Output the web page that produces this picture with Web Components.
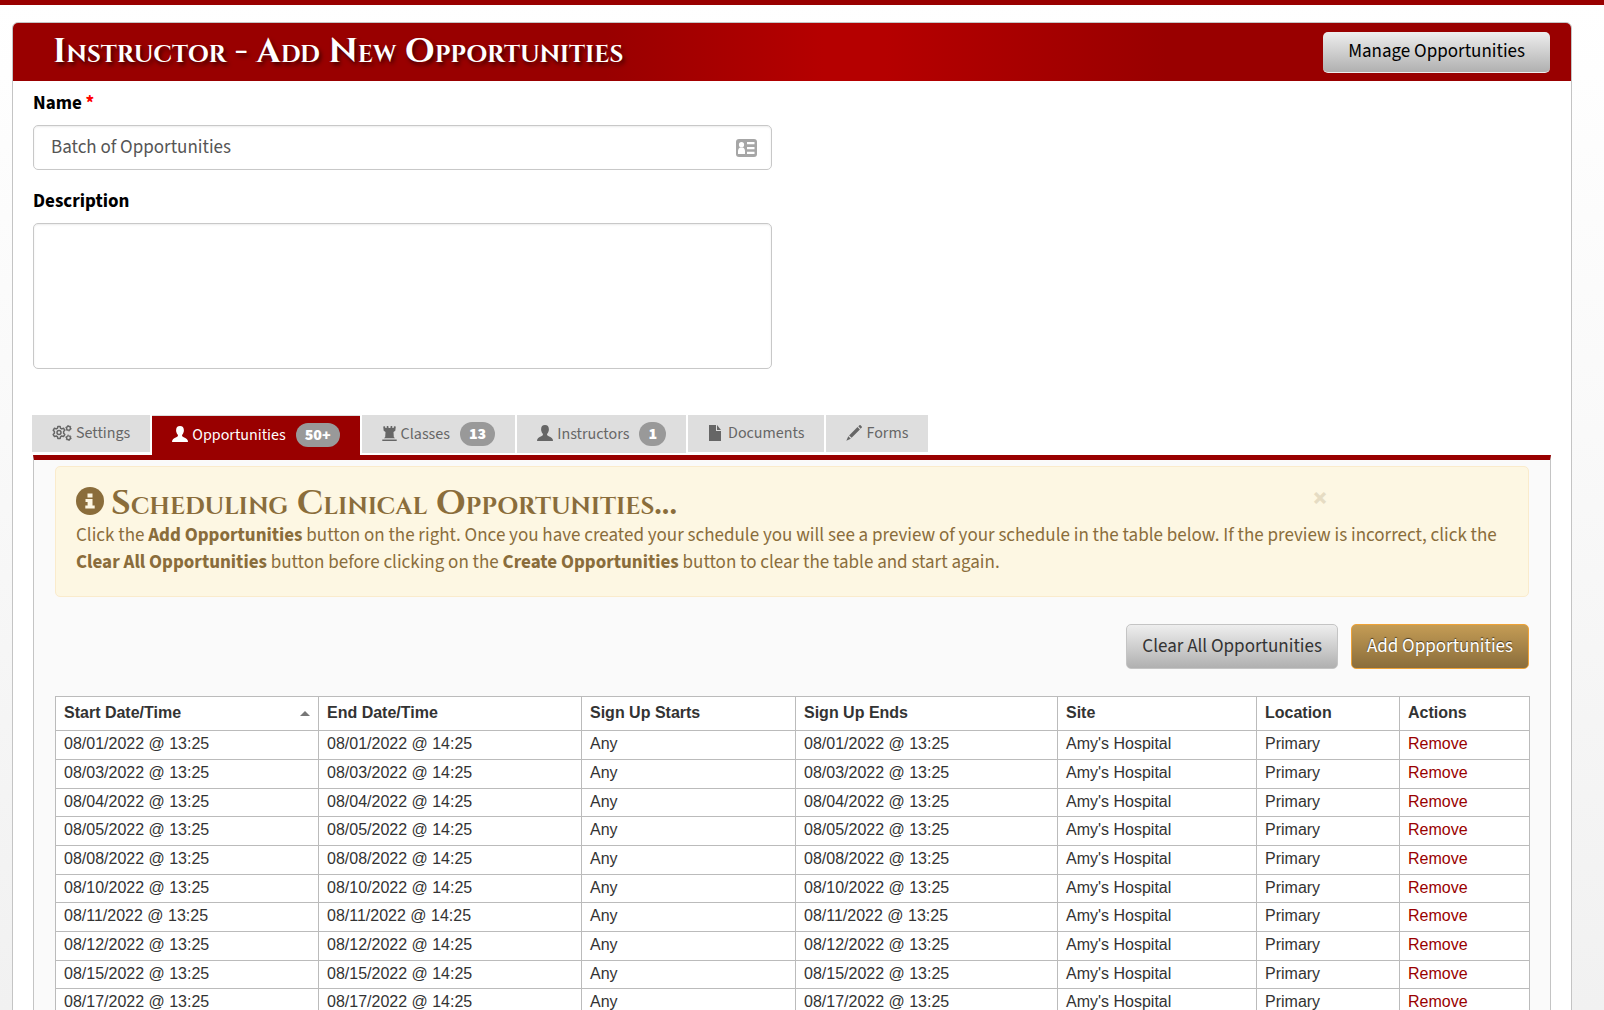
<!DOCTYPE html>
<html lang="en">
<head>
<meta charset="UTF-8">
<meta name="viewport" content="width=device-width, initial-scale=1.0">
<title>Instructor - Add New Opportunities</title>
<style>
    body {
        box-sizing: border-box;
        height: 100vh;
        margin: 0;
        overflow: hidden;
        border-top: 5px solid #990000;
        background: linear-gradient(#fff, #f1f1f1);
        color: #000;
        font: 19px/27px "Source Sans 3", "Noto Sans CJK SC", sans-serif;
    }

    .fields {
        display: grid;
        grid-template-columns: 1fr 1fr;
        column-gap: 40px;
        row-gap: 18px;
        margin-bottom: 46px;
    }

    .fields > * {
        grid-column: 1;
    }
</style>
</head>
<body>
    <page-card heading="Instructor - Add New Opportunities">
        <action-button slot="action" variant="header">Manage Opportunities</action-button>

        <div class="fields">
            <form-field label="Name" value="Batch of Opportunities" required></form-field>
            <form-field label="Description" multiline></form-field>
        </div>

        <tab-bar>
            <tab-item icon="cogs">Settings</tab-item>
            <tab-item icon="user" badge="50+" active>Opportunities</tab-item>
            <tab-item icon="tower" badge="13">Classes</tab-item>
            <tab-item icon="user" badge="1">Instructors</tab-item>
            <tab-item icon="file">Documents</tab-item>
            <tab-item icon="pencil">Forms</tab-item>
        </tab-bar>

        <tab-panel>
            <alert-box heading="Scheduling Clinical Opportunities...">
                Click the <strong>Add Opportunities</strong> button on the right. Once you have created your schedule you will see a preview of your schedule in the table below. If the preview is incorrect, click the <strong>Clear All Opportunities</strong> button before clicking on the <strong>Create Opportunities</strong> button to clear the table and start again.
            </alert-box>
            <action-button slot="actions">Clear All Opportunities</action-button>
            <action-button slot="actions" variant="gold">Add Opportunities</action-button>
            <schedule-table slot="table"></schedule-table>
        </tab-panel>
    </page-card>

<script>
const ICONS = {
    user: `<svg width="16" height="16" viewBox="0 0 16 16" fill="currentColor"><path d="M8 0C5.400 0 4.100 1.600 4.100 4.200c0 1.600.6 3.300 1.500 4.300.5.600.5 1.500-.1 2.100C4.300 11.600.9 12.500.3 14.200L0 16h16l-.3-1.800c-.6-1.700-4-2.600-5.200-3.600-.6-.6-.6-1.500-.1-2.100.9-1 1.500-2.700 1.500-4.300C11.900 1.600 10.600 0 8 0z"/></svg>`,
    tower: `<svg width="15" height="15" viewBox="0 0 15 15" fill="currentColor"><path d="M1.200.6 3 .2l.4 1.900h1.200L4.800 0h1.500l.3 2.100h1.800L8.700 0h1.500l.2 2.100h1.200L12 .2l1.800.4-.5 4.200-1.800 1.200.3 5 1.200 1.300H2l1.200-1.300.3-5L1.700 4.800zM.3 13.500h14.400V15H.3z"/></svg>`,
    file: `<svg width="16" height="16" viewBox="0 0 16 16" fill="currentColor"><path d="M1 0h7v6h5v10H1z"/><path d="M9 0l4 5H9z"/></svg>`,
    pencil: `<svg width="16" height="16" viewBox="0 0 16 16" fill="currentColor"><path d="M12.300 1.200 13.500.2c.5-.4.900-.2 1.300.2l.9 1c.4.4.4.8.1 1.200l-1.200 1.200zM11.500 2l2.400 2.500-8.300 8.300-2.500-2.400zM2.300 11.200l2.500 2.500L.3 15.700z"/></svg>`,
    cogs: `<svg width="20" height="16" viewBox="0 0 20 16" fill="none" stroke="currentColor"><path stroke-width="1.500" stroke-linejoin="round" d="M5.800 1.600h2.400l.4 1.700 1.200.6 1.700-.7 1.300 2.100-1.200 1.200v1.800l1.200 1.300-1.300 2-1.700-.6-1.200.7-.4 1.700H5.800l-.4-1.700-1.200-.7-1.700.6-1.300-2 1.200-1.300V6.500L1.200 5.300l1.300-2.100 1.700.7 1.200-.6z"/><circle cx="7" cy="7.500" r="2" stroke-width="1.500"/><circle cx="16.500" cy="3.200" r="1.900" stroke-width="1.400"/><circle cx="16.500" cy="12.800" r="1.900" stroke-width="1.400"/><circle cx="16.500" cy="3.200" r="2.800" stroke-width=".9" stroke-dasharray="1.400 1.500"/><circle cx="16.500" cy="12.800" r="2.800" stroke-width=".9" stroke-dasharray="1.400 1.500"/></svg>`,
    card: `<svg width="21" height="18" viewBox="0 0 21 18"><rect width="21" height="18" rx="3" fill="#a6a6a6"/><g fill="#fff"><circle cx="5.500" cy="5.700" r="2.600"/><path d="M2 15V12c0-2 1.300-3.300 2.500-3.500h2C7.800 8.700 9 10 9 12v3z"/><path d="M11 3h7.500v2.200H11zM11 8h7.500v2.200H11zM11 12.800h7.500V15H11z"/></g></svg>`,
    info: `<svg width="28" height="28" viewBox="0 0 28 28"><circle cx="14" cy="14" r="14" fill="#8a6d3b"/><path fill="#fdf7e3" d="M11.500 6.500h5v4h-5zM9.500 12h7v6.500h2.200V21.500H9.300v-3h2.300V15H9.500z"/></svg>`
};

// Card with the red title bar
class PageCard extends HTMLElement {
    connectedCallback() {
        this.attachShadow({ mode: 'open' }).innerHTML = `
            <style>
                :host {
                    display: block;
                    margin: 17px 32px 0 12px;
                    border: 1px solid #c4c4c4;
                    border-radius: 6px 6px 0 0;
                    background: #fff;
                    overflow: hidden;
                }

                header {
                    display: flex;
                    align-items: center;
                    justify-content: space-between;
                    height: 58px;
                    padding: 0 21px 0 40px;
                    background: linear-gradient(to right, #990000 38%, #b50000 52%, #b50000 56%, #990000 74%);
                }

                h1 {
                    margin: 0;
                    color: #fff;
                    font: small-caps bold 34px/35px "Cinzel", "Liberation Serif", serif;
                    text-shadow: 2px 3px 4px rgba(0,0,0,0.6);
                }

                main {
                    padding: 9px 20px 0;
                }
            </style>

            <header>
                <h1>${this.getAttribute('heading')}</h1>
                <slot name="action"></slot>
            </header>
            <main><slot></slot></main>
        `;
    }
}

class ActionButton extends HTMLElement {
    connectedCallback() {
        this.attachShadow({ mode: 'open' }).innerHTML = `
            <style>
                :host {
                    display: block;
                }

                button {
                    display: block;
                    height: 45px;
                    padding: 0 15px;
                    border: 1px solid #c4c4c4;
                    border-radius: 5px;
                    background: linear-gradient(#eee, #b0b0b0);
                    color: #333;
                    font: inherit;
                    cursor: pointer;
                }

                :host([variant="header"]) button {
                    height: 41px;
                    padding: 0 25px;
                    border-width: 0 0 1px;
                    border-color: #eee;
                    color: #000;
                }

                :host([variant="gold"]) button {
                    border-color: #eea236;
                    background: linear-gradient(#c49c55, #8a6d3b);
                    color: #fff;
                    text-shadow: 0 -1px 1px rgba(0,0,0,0.6);
                }
            </style>

            <button type="button"><slot></slot></button>
        `;
    }
}

class FormField extends HTMLElement {
    connectedCallback() {
        const required = this.hasAttribute('required') ? '<span class="star">*</span>' : '';
        const control = this.hasAttribute('multiline')
            ? '<textarea id="control"></textarea>'
            : `<div class="box"><input id="control" type="text" value="${this.getAttribute('value') || ''}">${ICONS.card}</div>`;

        this.attachShadow({ mode: 'open' }).innerHTML = `
            <style>
                :host {
                    display: block;
                }

                label {
                    display: block;
                    margin-bottom: 8px;
                    font-weight: bold;
                }

                .star {
                    color: #ff0000;
                }

                .box, textarea {
                    box-sizing: border-box;
                    width: 100%;
                    border: 1px solid #c8c8c8;
                    border-radius: 5px;
                    background: #fff;
                    box-shadow: inset 0 1px 2px rgba(0,0,0,0.08);
                }

                .box {
                    display: flex;
                    align-items: center;
                    height: 45px;
                    padding: 0 14px 0 17px;
                }

                input {
                    flex: 1;
                    min-width: 0;
                    padding: 0;
                    border: 0;
                    background: none;
                    color: #555;
                    font: inherit;
                    outline: none;
                }

                textarea {
                    display: block;
                    height: 146px;
                    padding: 8px 17px;
                    font: inherit;
                    resize: none;
                }
            </style>

            <label for="control">${this.getAttribute('label')} ${required}</label>
            ${control}
        `;
    }
}

class TabBar extends HTMLElement {
    connectedCallback() {
        this.attachShadow({ mode: 'open' }).innerHTML = `
            <style>
                :host {
                    display: flex;
                    align-items: flex-start;
                    gap: 2px;
                    height: 40px;
                    margin: 0 -1px;
                }
            </style>

            <slot></slot>
        `;
        this.setAttribute('role', 'tablist');
    }
}

class TabItem extends HTMLElement {
    connectedCallback() {
        const badge = this.getAttribute('badge');
        const active = this.hasAttribute('active');

        this.attachShadow({ mode: 'open' }).innerHTML = `
            <style>
                :host {
                    display: block;
                }

                button {
                    display: flex;
                    align-items: center;
                    gap: 4px;
                    padding: 7px 20px;
                    border: 0;
                    background: #dedede;
                    color: #666;
                    font: inherit;
                    font-size: 16px;
                    line-height: 23px;
                    cursor: pointer;
                }

                :host([active]) button {
                    padding-bottom: 8px;
                    border-top: 1px solid #ddd;
                    background: #990000;
                    color: #fff;
                }

                .badge {
                    margin-left: 6px;
                    padding: 0 9px;
                    border-radius: 12px;
                    background: #999;
                    color: #fff;
                    font-weight: 900;
                    line-height: 24px;
                }

                svg {
                    margin-bottom: 2px;
                }
            </style>

            <button type="button" role="tab" aria-selected="${active}">
                ${ICONS[this.getAttribute('icon')]}
                <slot></slot>
                ${badge ? `<span class="badge">${badge}</span>` : ''}
            </button>
        `;
    }
}

class TabPanel extends HTMLElement {
    connectedCallback() {
        this.attachShadow({ mode: 'open' }).innerHTML = `
            <style>
                :host {
                    display: block;
                    padding: 6px 21px 20px;
                    border: 1px solid #c4c4c4;
                    border-top: 5px solid #990000;
                    background: #fafafa;
                }

                .actions {
                    display: flex;
                    justify-content: flex-end;
                    gap: 13px;
                    margin: 27px 0;
                }
            </style>

            <slot></slot>
            <div class="actions"><slot name="actions"></slot></div>
            <slot name="table"></slot>
        `;
    }
}

class AlertBox extends HTMLElement {
    connectedCallback() {
        this.attachShadow({ mode: 'open' }).innerHTML = `
            <style>
                :host {
                    display: block;
                    padding: 20px;
                    border: 1px solid #faebcc;
                    border-radius: 5px;
                    background: #fdf7e3;
                    color: #8a6d3b;
                }

                .top {
                    display: flex;
                    align-items: flex-start;
                    gap: 7px;
                    height: 35px;
                }

                h2 {
                    flex: 1;
                    margin: 0;
                    font: small-caps bold 34px/35px "Cinzel", "Liberation Serif", serif;
                }

                .close {
                    width: 24px;
                    height: 24px;
                    margin-right: 176px;
                    padding: 0;
                    border: 0;
                    background: none;
                    color: #e6dcc3;
                    font: 900 27px/24px "Source Sans 3", "Liberation Sans", sans-serif;
                    cursor: pointer;
                }

                p {
                    margin: 0;
                }
            </style>

            <div class="top">
                ${ICONS.info}
                <h2>${this.getAttribute('heading')}</h2>
                <button class="close" type="button" aria-label="Close">×</button>
            </div>
            <p><slot></slot></p>
        `;
    }
}

class ScheduleTable extends HTMLElement {
    connectedCallback() {
        const days = ['01', '03', '04', '05', '08', '10', '11', '12', '15', '17'];
        const rows = days.map(day => `
            <tr>
                <td>08/${day}/2022 @ 13:25</td>
                <td>08/${day}/2022 @ 14:25</td>
                <td>Any</td>
                <td>08/${day}/2022 @ 13:25</td>
                <td>Amy's Hospital</td>
                <td>Primary</td>
                <td><a href="#">Remove</a></td>
            </tr>
        `).join('');

        this.attachShadow({ mode: 'open' }).innerHTML = `
            <style>
                :host {
                    display: block;
                }

                table {
                    width: 100%;
                    table-layout: fixed;
                    border-collapse: collapse;
                    background: #fff;
                    color: #333;
                    font: 16px/18px "Liberation Sans", Arial, sans-serif;
                }

                th, td {
                    border: 1px solid #bbb;
                    text-align: left;
                }

                th {
                    padding: 7px 8px 8px;
                }

                td {
                    padding: 4px 8px 6px;
                }

                tr:nth-child(3n) td {
                    padding-bottom: 5px;
                }

                .sorted {
                    display: flex;
                    align-items: center;
                    justify-content: space-between;
                }

                .sorted::after {
                    content: "";
                    border: 5px solid transparent;
                    border-top: 0;
                    border-bottom-color: #777;
                }

                a {
                    color: #990000;
                    text-decoration: none;
                }
            </style>

            <table>
                <colgroup>
                    <col style="width: 263px">
                    <col style="width: 263px">
                    <col style="width: 214px">
                    <col style="width: 262px">
                    <col style="width: 199px">
                    <col style="width: 143px">
                    <col style="width: 130px">
                </colgroup>
                <thead>
                    <tr>
                        <th aria-sort="ascending"><div class="sorted">Start Date/Time</div></th>
                        <th>End Date/Time</th>
                        <th>Sign Up Starts</th>
                        <th>Sign Up Ends</th>
                        <th>Site</th>
                        <th>Location</th>
                        <th>Actions</th>
                    </tr>
                </thead>
                <tbody>${rows}</tbody>
            </table>
        `;
    }
}

customElements.define('page-card', PageCard);
customElements.define('action-button', ActionButton);
customElements.define('form-field', FormField);
customElements.define('tab-bar', TabBar);
customElements.define('tab-item', TabItem);
customElements.define('tab-panel', TabPanel);
customElements.define('alert-box', AlertBox);
customElements.define('schedule-table', ScheduleTable);
</script>
</body>
</html>
